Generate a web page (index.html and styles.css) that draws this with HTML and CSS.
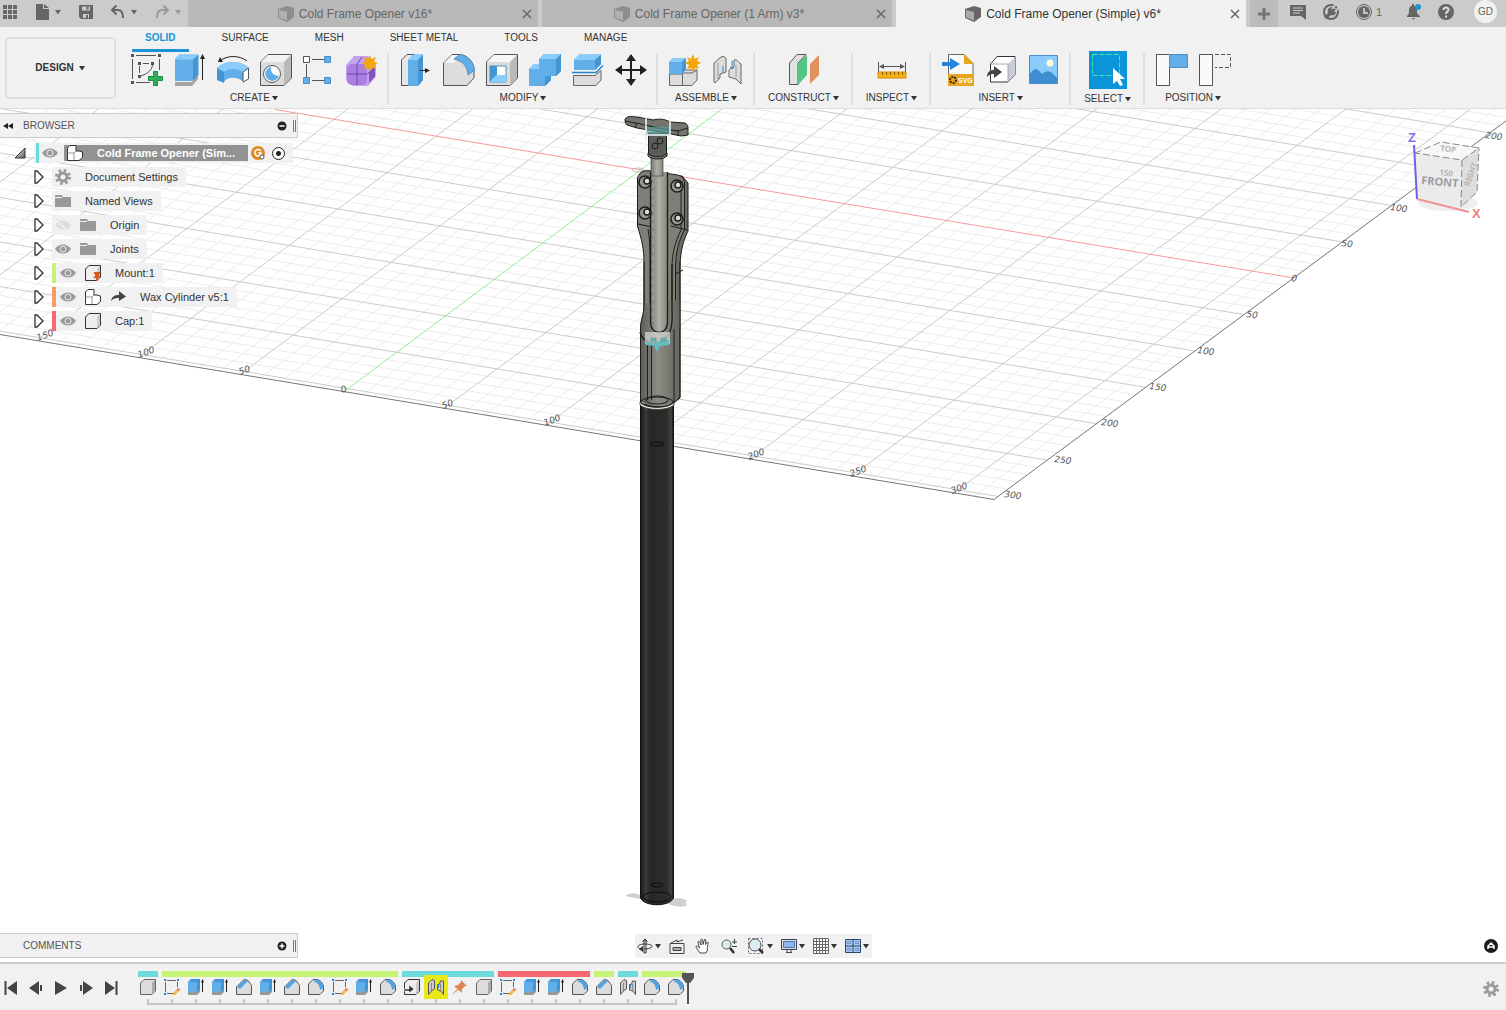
FILE: index.html
```html
<!DOCTYPE html>
<html lang="en">
<head>
<meta charset="utf-8">
<title>Cold Frame Opener (Simple) v6*</title>
<link rel="stylesheet" href="styles.css">
</head>
<body>
<svg class="defs" aria-hidden="true">
  <defs>
    <linearGradient id="tube" x1="0" x2="1" y1="0" y2="0">
      <stop offset="0" stop-color="#151514"/><stop offset=".15" stop-color="#3a3a37"/><stop offset=".3" stop-color="#272726"/><stop offset=".8" stop-color="#2c2c2a"/><stop offset=".93" stop-color="#454541"/><stop offset="1" stop-color="#111"/>
    </linearGradient>
    <linearGradient id="rod" x1="0" x2="1" y1="0" y2="0">
      <stop offset="0" stop-color="#77776f"/><stop offset=".5" stop-color="#b0b0a9"/><stop offset="1" stop-color="#85857d"/>
    </linearGradient>
    <linearGradient id="sleeve" x1="0" x2="1" y1="0" y2="0">
      <stop offset="0" stop-color="#5d5d57"/><stop offset=".45" stop-color="#8c8c85"/><stop offset="1" stop-color="#65655f"/>
    </linearGradient>
    <linearGradient id="tri" x1="0" x2="1" y1="0" y2="1"><stop offset="0" stop-color="#fff"/><stop offset="1" stop-color="#555"/></linearGradient>
    <clipPath id="plane"><path d="M0 334.500 994 499.500 1506 120V90H0Z"/></clipPath>
  </defs>
  <symbol id="caret" viewBox="0 0 8 8"><path d="M1 2h6L4 6.500Z" fill="currentColor"/></symbol>
  <symbol id="close" viewBox="0 0 10 10"><path d="M1 1l8 8M9 1 1 9" stroke="currentColor" stroke-width="1.500" fill="none"/></symbol>
  <symbol id="apps" viewBox="0 0 16 16"><path d="M1 1h4v4H1zM6 1h4v4H6zM11 1h4v4h-4zM1 6h4v4H1zM6 6h4v4H6zM11 6h4v4h-4zM1 11h4v4H1zM6 11h4v4H6zM11 11h4v4h-4z" fill="#666"/></symbol>
  <symbol id="file" viewBox="0 0 16 16"><path d="M2 0h7v5h6v11H2zM10 0l5 4h-5z" fill="#666"/></symbol>
  <symbol id="save" viewBox="0 0 16 16"><path d="M1 1h14v14H3l-2-2z" fill="#666"/><path d="M4 2.500h8v4H4zM5 10h6v4H5z" fill="#cbcbcb"/><path d="M8.500 2.500h2v3h-2zM8 11h2v3H8z" fill="#666"/></symbol>
  <symbol id="undo" viewBox="0 0 16 16"><path d="M2 6h6c3.500 0 5 2.500 5 8M6.500 1.500 2 6l4.500 4.500" fill="none" stroke="currentColor" stroke-width="2"/></symbol>
  <symbol id="doc" viewBox="0 0 16 16"><path d="M0 3 9 0l7 2v9l-7 5-9-4z" fill="#666"/><path d="M1 4l8 2v8.500L1 11.500z" fill="#a9a9a9"/></symbol>
  <symbol id="plus" viewBox="0 0 14 14"><path d="M7 1v12M1 7h12" stroke="#777" stroke-width="3"/></symbol>
  <symbol id="msg" viewBox="0 0 18 18"><path d="M1 2h16v15l-5-4H1z" fill="#666"/><path d="M4 5h10M4 7.500h10M4 10h7" stroke="#cbcbcb"/></symbol>
  <symbol id="ext" viewBox="0 0 18 18"><circle cx="9" cy="9" r="7" fill="none" stroke="#666" stroke-width="2"/><path d="M2 14 6 10c-1-4 1-6 5-6l3 3c1 4-2 6-5 5l-4 4z" fill="#666"/><path d="M10 6l4-5M13 9l4-5" stroke="#cbcbcb" stroke-width="2"/></symbol>
  <symbol id="clock" viewBox="0 0 18 18"><circle cx="9" cy="9" r="7.500" fill="none" stroke="#666"/><circle cx="9" cy="9" r="6" fill="#666"/><path d="M9 5v5h4" fill="none" stroke="#ddd" stroke-width="1.500"/></symbol>
  <symbol id="bell" viewBox="0 0 18 18"><path d="M3 13c2-2 2-3 2-6 0-2 1-4 3-4V1h2v2c2 0 3 2 3 4 0 3 0 4 3 6v1H3zM8 15h3l-1.500 2z" fill="#666"/><circle cx="14" cy="4" r="3" fill="#1a94d6"/></symbol>
  <symbol id="help" viewBox="0 0 18 18"><circle cx="9" cy="9" r="8" fill="#666"/><path d="M6.500 7c0-3.500 5.500-3 5 0-.2 1.500-2.500 1.800-2.500 4M9 12.500v2" fill="none" stroke="#ddd" stroke-width="2"/></symbol>

  <symbol id="t-sketch" viewBox="0 0 32 32"><path d="M5 1.500h20M1.500 5v20M28.500 5v11M5 28.500h14M12 9.500h6M8.500 12v7" stroke="#555" fill="none"/><path d="M21.500 10c0 6-5 10-12 12" stroke="#555" fill="none"/><path d="M0 0h3v3H0zM27 0h3v3h-3zM0 27h3v3H0zM7 8h3v3H7zM20 8h3v3h-3zM7 21h3v3H7z" fill="#555"/><path d="M22.500 17.500h4v5h5v4h-5v5h-4v-5h-5v-4h5z" fill="#2eae56" stroke="#1a8f40"/></symbol>
  <symbol id="t-extrude" viewBox="0 0 32 32"><path d="M1 28h17l6-7v4l-6 7H1z" fill="#a6a6a6"/><path d="M1 5 5 .5h19L19 5v22H1z" fill="#62aee8"/><path d="M1 5.500 5.500.5h19L19 5.500z" fill="#8acdfd"/><path d="M19 5.500 24.500.5V21L19 27z" fill="#4395d3"/><path d="M28.500 26V4" stroke="#222"/><path d="M28.500 0 31 5h-5z" fill="#222"/></symbol>
  <symbol id="t-revolve" viewBox="0 0 32 32"><path d="M0 14c8-8 24-8 32 0l-5 2v12c-6-5-16-6-20 0L0 26z" fill="#62aee8"/><path d="M0 14c8-8 24-8 32 0l-6 4c-5-4-15-4-19 0z" fill="#8acdfd"/><path d="M7 18v11L0 26V14zM0 14l7 4" fill="#4395d3"/><path d="M26 18l5.500-4v11l-5.500 3z" fill="#fff" stroke="#555"/><path d="M3 7c7-6 19-6 27 0" stroke="#222" fill="none"/><path d="M1 8l2-5 3 5z" fill="#222"/></symbol>
  <symbol id="t-hole" viewBox="0 0 32 32"><path d="M.5 8 8 .5h23.500V24L24 31.500H.5z" fill="#dcdcdc" stroke="#555"/><path d="M1 8 8 1h23l-7 7z" fill="#f3f3f3"/><path d="M24 8l7-7v23l-7 7z" fill="#b9b9b9"/><circle cx="12" cy="20" r="8.500" fill="#fff" stroke="#555"/><path d="M11 13a7 7 0 1 0 8 9c-5 0-9-4-8-9z" fill="#62aee8"/></symbol>
  <symbol id="t-pattern" viewBox="0 0 32 32"><path d="M9 5.500h12M3.500 10v13M9 26.500h12" stroke="#555"/><path d="M.5 2.500h6v6h-6z" fill="#fff" stroke="#555"/><path d="M21.500 2.500h6v6h-6zM.5 23.500h6v6h-6zM21.500 23.500h6v6h-6z" fill="#62aee8" stroke="#4d8fc4"/></symbol>
  <symbol id="t-form" viewBox="0 0 32 32"><path d="M8 2h14l8 8v12l-8 10H7l-7-6V11z" fill="#c3a2f0"/><rect x="1" y="10" width="20" height="21" rx="5" fill="#a97fe0"/><path d="M23 18l6-6v11l-6 6z" fill="#8453c4"/><path d="M1 20h20l8-5M11 10v21M11 10l5-7" stroke="#7245b0" fill="none"/><path d="M24 1l1.500 4L30 3l-2 4.500 4 1.500-4 2 2 4-4.500-1.500L24 18l-2-4.500-4.500 1.500 2-4-4-2 4-1.500-2-4.500L22 5z" fill="#f6a609"/></symbol>
  <symbol id="t-press" viewBox="0 0 32 32"><path d="M1.500 6 7 .5h8L9 6v25.500H1.500z" fill="#e6e6e6" stroke="#555"/><path d="M8 6 13.500.5H23V26l-5 6H8z" fill="#62aee8"/><path d="M8 6l5.500-5.500H23L18 6z" fill="#8acdfd"/><path d="M18 6l5-5.500V26l-5 6z" fill="#4395d3"/><path d="M20 16.500h7" stroke="#222"/><path d="M30 16.500 25 19v-5z" fill="#222"/></symbol>
  <symbol id="t-fillet" viewBox="0 0 32 32"><path d="M.5 9 9 .5h8c9 1 14 9 14 16V24l-7 7.500H.5z" fill="#dcdcdc" stroke="#555"/><path d="M1 9 9 1h8l-6 8z" fill="#f4f4f4"/><path d="M11 5 17 .5C27 2 31 10 31.500 16L25 21C25 13 20 7 11 5z" fill="#62aee8" stroke="#4d8fc4"/></symbol>
  <symbol id="t-shell" viewBox="0 0 32 32"><path d="M.5 8 8 .5h23.500V24L24 31.500H.5z" fill="#dcdcdc" stroke="#555"/><path d="M1 8 8 1h23l-7 7z" fill="#f7f7f7"/><path d="M24 8l7-7v23l-7 7z" fill="#b9b9b9"/><path d="M4 12h16v16H4z" fill="#fff" stroke="#4d8fc4"/><path d="M4 12h7v9l-7 7z" fill="#4395d3"/><path d="M4 28l6-7h10v7z" fill="#8acdfd"/></symbol>
  <symbol id="t-combine" viewBox="0 0 32 32"><path d="M10 5l5-5h17v17l-5 5h-5v4l-6 6H0V15l5-5h5z" fill="#62aee8"/><path d="M10 5l5-5h17l-5 5zM0 15l5-5h5v5z" fill="#8acdfd"/><path d="M27 5l5-5v17l-5 5zM16 26v6l6-6v-4h-6z" fill="#4395d3"/></symbol>
  <symbol id="t-split" viewBox="0 0 32 32"><path d="M2 6 7 .5h22V10l-6 6H2z" fill="#62aee8"/><path d="M2 6 7 .5h22L23 6z" fill="#8acdfd"/><path d="M23 6l6-5.500V10l-6 6z" fill="#4395d3"/><path d="M0 18.500h24l7-7" fill="none" stroke="#2286c9" stroke-width="1.500"/><path d="M1.500 21.500H23l6-5V26l-5 5.500H1.500z" fill="#dcdcdc" stroke="#666"/></symbol>
  <symbol id="t-move" viewBox="0 0 32 32"><path d="M16 4v24M4 16h24" stroke="#222" stroke-width="2"/><path d="M16 0l5 7H11zM16 32l5-7H11zM0 16l7-5v10zM32 16l-7-5v10z" fill="#222"/></symbol>
  <symbol id="t-newcomp" viewBox="0 0 32 32"><path d="M.5 20h13v-3l2-1h12.500v10l-5 5.500H.5z" fill="#dcdcdc" stroke="#666"/><path d="M13.500 31V19h9.500l5-3" fill="none" stroke="#666"/><path d="M0 8l4-4h13v11l-4 5H0z" fill="#62aee8"/><path d="M0 8l4-4h13l-4 4z" fill="#8acdfd"/><path d="M13 8l4-4v11l-4 5z" fill="#4395d3"/><path d="M24 0l1.500 5L30 3l-2 4 4 2-4 2 2 4-4-1-2 4-2-4-4 1 2-4-4-2 4-2-2-4 4 2z" fill="#f6a609"/></symbol>
  <symbol id="t-joint" viewBox="0 0 32 32"><path d="M2 9 9 3c3-1 5 0 5 2v13l-6 2v4l-5 5-1-1z" fill="#dcdcdc" stroke="#666"/><path d="M17 16c2-2 4-2 5-4V6c3-1 4 2 7 4v20l-5-5-7-2z" fill="#dcdcdc" stroke="#666"/><path d="M6 9v16M24 11v12" stroke="#999"/><path d="M11 12v7M20 7v8M18 13l2 2 2-2" stroke="#2286c9" fill="none"/></symbol>
  <symbol id="t-plane" viewBox="0 0 32 32"><path d="M1.500 9 9 .5h9L10 9v21.500H1.500z" fill="#e2e2e2" stroke="#555"/><path d="M10 9l9-8v20l-9 10z" fill="#55c585"/><path d="M22 10l9-9v20l-9 9z" fill="#e2925f"/></symbol>
  <symbol id="t-measure" viewBox="0 0 32 32"><path d="M2.500 8v10M29.500 8v10M5 12.500h22" stroke="#555"/><path d="M3 12.500 8 10v5zM29 12.500 24 10v5z" fill="#555"/><path d="M2 18h28v6H2z" fill="#f9b21a" stroke="#d88d00"/><path d="M6.500 18v3M10.500 18v3M14.500 18v3M18.500 18v3M22.500 18v3M26.500 18v3" stroke="#8a5a00"/></symbol>
  <symbol id="t-svg" viewBox="0 0 32 32"><path d="M6.500 31V.5H22l9 9V31z" fill="#fafafa" stroke="#666"/><path d="M22 0v10h10z" fill="#e9a520"/><path d="M6 20h26v12H6z" fill="#e9a520"/><path d="M0 8h8V4l10 6-10 6v-4H0z" fill="#1f87de"/><circle cx="11" cy="26" r="3" fill="none" stroke="#3a2800" stroke-width="2" stroke-dasharray="2 1"/></symbol>
  <symbol id="t-insert" viewBox="0 0 32 32"><path d="M5.500 10 12 2.500h18V21l-7 7H5.500z" fill="#fff" stroke="#333"/><path d="M23 10l7-7v18l-7 7z" fill="#c9ccda"/><path d="M6 10h17v18" fill="none" stroke="#aaa"/><path d="M2 23c0-6 4-7 7-7v-4l8 6-8 6v-4c-3 0-4 0-7 3z" fill="#444"/></symbol>
  <symbol id="t-image" viewBox="0 0 32 32"><path d="M1.500 1.500h28v28h-28z" fill="#8acdfd" stroke="#4d8fc4"/><path d="M2 20c6-9 8-4 12 0 5-4 8-4 15 4v5H2z" fill="#3d8ed0"/><circle cx="22" cy="9" r="3.500" fill="#fffbdc"/></symbol>
  <symbol id="t-select" viewBox="0 0 38 38"><path d="M3.500 3.500h27v21h-27z" fill="none" stroke="#3fe6a5" stroke-dasharray="5 2"/><path d="M24 17v16l4-3 3 5 3-1-3-6h5z" fill="#fff"/></symbol>
  <symbol id="t-capture" viewBox="0 0 32 32"><path d="M.5.5h13v31H.5z" fill="#fafafa" stroke="#555"/><path d="M13.500.5h18v13h-18z" fill="#62aee8" stroke="#4d8fc4"/></symbol>
  <symbol id="t-revert" viewBox="0 0 32 32"><path d="M.5.5h13v31H.5z" fill="#fafafa" stroke="#555"/><path d="M16 .5h15.500v13H16" fill="none" stroke="#555" stroke-dasharray="4 2"/></symbol>

  <symbol id="eye" viewBox="0 0 16 16"><path d="M0 8c4-6 12-6 16 0-4 6-12 6-16 0z" fill="#999"/><circle cx="8" cy="8" r="3" fill="#999" stroke="#eee"/></symbol>
  <symbol id="eyeoff" viewBox="0 0 16 16"><path d="M0 8c4-6 12-6 16 0-4 6-12 6-16 0z" fill="#dcdcdc"/><path d="M2 3l12 11" stroke="#f1f1f1" stroke-width="3"/><path d="M2 2l12 11" stroke="#d0d0d0"/></symbol>
  <symbol id="gear" viewBox="0 0 16 16"><circle cx="8" cy="8" r="6.500" fill="none" stroke="#999" stroke-width="3" stroke-dasharray="2.500 2.600"/><circle cx="8" cy="8" r="4" fill="none" stroke="#999" stroke-width="3"/></symbol>
  <symbol id="folder" viewBox="0 0 16 16"><path d="M0 2h7l1 2h8v10H0z" fill="#999"/><path d="M0 4.500h7" stroke="#f1f1f1"/></symbol>
  <symbol id="asm" viewBox="0 0 16 16"><path d="M.5 3 3 .5h6V6h3l3.500 1v5.500L12 15.500H.5z" fill="#fff" stroke="#333"/><path d="M.5 8H7l2-2M7 8v7" fill="none" stroke="#999"/></symbol>
  <symbol id="box" viewBox="0 0 16 16"><path d="M.5 4 4 .5h11.500V12L12 15.500H.5z" fill="#eee" stroke="#333"/><path d="M12 4l3-3v11l-3 3z" fill="#ccc"/></symbol>
  <symbol id="solid" viewBox="0 0 16 16"><path d="M.5 4 4 .5h11.500V12L12 15.500H.5z" fill="#dcdcdc" stroke="#666"/><path d="M12 4l3-3v11l-3 3z" fill="#aaa"/></symbol>
  <symbol id="mount" viewBox="0 0 16 16"><use href="#box"/><path d="M9 7h6v2h-1v2l2 2h-3v3h-2v-3H8l2-2V9H9z" fill="#d9591c"/></symbol>
  <symbol id="link" viewBox="0 0 16 16"><path d="M1 12c1-5 4-6 8-6V2l7 5.500L9 12V9c-3 0-5 0-8 3z" fill="#444"/></symbol>
  <symbol id="arrow" viewBox="0 0 10 14"><path d="M1 1h2l6 6-6 6H1z" fill="#fafafa" stroke="#333" stroke-width="1.300"/></symbol>
  <symbol id="arrow-open" viewBox="0 0 12 12"><path d="M11 1v10H1z" fill="url(#tri)" stroke="#333"/></symbol>
  <symbol id="badge" viewBox="0 0 16 16"><circle cx="8" cy="8" r="7" fill="#dd8b20"/><path d="M11 6c-2-3-7-1-6 2 0 4 6 4 6 0H8" fill="none" stroke="#fff" stroke-width="1.500"/><circle cx="12" cy="12" r="2" fill="#fff" stroke="#555"/></symbol>
  <symbol id="minus-dot" viewBox="0 0 10 10"><circle cx="5" cy="5" r="4.500" fill="#222"/><path d="M2.500 5h5" stroke="#fff" stroke-width="1.500"/></symbol>
  <symbol id="plus-dot" viewBox="0 0 10 10"><circle cx="5" cy="5" r="4.500" fill="#222"/><path d="M2.500 5h5M5 2.500v5" stroke="#fff" stroke-width="1.500"/></symbol>
  <symbol id="collapse" viewBox="0 0 10 6"><path d="M5 0v6L0 3zM10 0v6L5 3z" fill="#222"/></symbol>

  <symbol id="n-orbit" viewBox="0 0 16 16"><path d="M7 2h2v13H7zM5.500 4 8 1l2.500 3M3 11C-2 8 3 6 8 6s10 2 5 4c-2 1-4 1-6 1" fill="none" stroke="#333"/><path d="M2 11l4-3v6z" fill="#333"/></symbol>
  <symbol id="n-look" viewBox="0 0 16 16"><path d="M1 5.500h14v10H1zM2 5l6-3v2l6-2" fill="#eee" stroke="#444"/><path d="M4 9.500h8v3H4z" fill="#aaa" stroke="#444"/></symbol>
  <symbol id="n-hand" viewBox="0 0 16 16"><path d="M5 15C3 12 1 10 1 8.500 2 7 3 9 4.500 10L3 4c1-2 2 0 3 3V1.500c1-1.500 2 0 2 5L9.500 1.500c2-1 1 2 1 5L12.500 4c2 0-1 5 0 8l-1.500 3z" fill="#fff" stroke="#444"/></symbol>
  <symbol id="n-zoom" viewBox="0 0 16 16"><circle cx="5.500" cy="6.500" r="4.500" fill="#dcecf0" stroke="#555"/><path d="M9 10l4 5" stroke="#333" stroke-width="2.500"/><path d="M11 4h5M13.500 1v5M11 8.500h5" stroke="#444"/></symbol>
  <symbol id="n-fit" viewBox="0 0 18 16"><path d="M1.500.5h14v15h-14z" fill="none" stroke="#666" stroke-dasharray="2 2"/><circle cx="8" cy="7" r="6" fill="#dcecf0" stroke="#555"/><path d="M12 11l4 4" stroke="#333" stroke-width="2.500"/></symbol>
  <symbol id="n-display" viewBox="0 0 16 16"><path d="M.5 1.500h15v10H.5z" fill="#ddd" stroke="#34465c"/><path d="M2.500 3.500h11v6h-11z" fill="#8fb4e8" stroke="#4d78b5"/><path d="M5 14.500h6M6 12v2M10 12v2" stroke="#444"/></symbol>
  <symbol id="n-grid" viewBox="0 0 16 16"><path d="M.5.5h15v15H.5zM3.500 0v16M6.500 0v16M9.500 0v16M12.500 0v16M0 3.500h16M0 6.500h16M0 9.500h16M0 12.500h16" fill="#fff" stroke="#666"/></symbol>
  <symbol id="n-views" viewBox="0 0 16 16"><path d="M.5 1.500h15v13H.5zM8 1.500v13M.5 8h15" fill="#a9c8f2" stroke="#2d4668"/><path d="M2.500 3.500h3v2h-3zM10.500 3.500h3v2h-3zM2.500 10.500h3v2h-3zM10.500 10.500h3v2h-3z" fill="none" stroke="#6e95cf"/></symbol>
  <symbol id="adsk" viewBox="0 0 16 16"><circle cx="8" cy="8" r="7" fill="#1c1c1c"/><path d="M5 11V8l3-3 3 3v3M5.500 9h5" fill="none" stroke="#fff" stroke-width="1.500"/></symbol>

  <symbol id="p-first" viewBox="0 0 14 14"><path d="M1.500 0v14" stroke="#444" stroke-width="2"/><path d="M13 0v14L3 7z" fill="#444"/></symbol>
  <symbol id="p-prev" viewBox="0 0 14 14"><path d="M10 0v14L0 7zM11 4h2v6h-2z" fill="#444"/></symbol>
  <symbol id="p-play" viewBox="0 0 14 14"><path d="M1 0v14l12-7z" fill="#444"/></symbol>

  <symbol id="f-sketch" viewBox="0 0 16 16"><path d="M3 1.500h9M1.500 3v10M13.500 3v5M3 14.500h6" stroke="#666" fill="none"/><path d="M0 0h2v2H0zM13 0h2v2h-2zM0 14h2v2H0z" fill="#1f87de"/><path d="M9 14l4-4 2 2-4 4H8z" fill="#f3b14b"/><path d="M13 10l1-1 2 2-1 1z" fill="#e04848"/></symbol>
  <symbol id="f-extrude" viewBox="0 0 16 16"><path d="M0 12h9l3-3v4l-3 3H0z" fill="#999"/><path d="M0 3 3 0h9v10l-3 3H0z" fill="#4395d3"/><path d="M0 3h9v10H0z" fill="#62aee8"/><path d="M14.500 2v11" stroke="#222"/><path d="M14.500 0 16 3.500h-3z" fill="#222"/></symbol>
  <symbol id="f-chamfer" viewBox="0 0 16 16"><path d="M.5 8 8 .5l4 1 3.500 5V15.500H.5z" fill="#dcdcdc" stroke="#555"/><path d="M1 8 8 1l4 1-8 8z" fill="#4fa3e3"/></symbol>
  <symbol id="f-fillet" viewBox="0 0 16 16"><path d="M.5 5 5 .5h4c4 1 6.500 4 6.500 8V12L12 15.500H.5z" fill="#dcdcdc" stroke="#555"/><path d="M5 2 8 .5C13 1 15.500 5 15.500 9L12 11c0-5-3-8-7-9z" fill="#4fa3e3"/></symbol>
  <symbol id="f-insert" viewBox="0 0 16 16"><use href="#box"/><path d="M0 10h5V6l5 4-5 4v-2H0z" fill="#333" stroke="#fff" stroke-width=".500"/></symbol>
  <symbol id="f-joint" viewBox="0 0 16 16"><path d="M.5 4 4 .5l2.500 1V10l-2 1-4 4.500zM9.500 7l2-2 1-3 3 0v13.500L13 12l-3.500-1z" fill="#ccc" stroke="#555"/><path d="M3.500 4v8M12.500 5v6" stroke="#888"/><path d="M10 5v4" stroke="#2286c9" stroke-width="2"/></symbol>
  <symbol id="f-pin" viewBox="0 0 16 16"><path d="M9 1l6 6-2 0-3 3v4L2 7l4-1 3-3zM5 10l1 1-6 5z" fill="#dd8650"/></symbol>
</svg>

<header class="topbar">
  <div class="quick">
    <button aria-label="Data panel"><svg class="i16"><use href="#apps"/></svg></button>
    <button aria-label="File"><svg class="i16"><use href="#file"/></svg><svg class="i8"><use href="#caret"/></svg></button>
    <button aria-label="Save"><svg class="i16"><use href="#save"/></svg></button>
    <button aria-label="Undo"><svg class="i16"><use href="#undo"/></svg><svg class="i8"><use href="#caret"/></svg></button>
    <button aria-label="Redo" class="off"><svg class="i16 flip"><use href="#undo"/></svg><svg class="i8"><use href="#caret"/></svg></button>
  </div>
  <nav class="doctabs">
    <div class="doctab"><a href="#v16"><svg class="i16"><use href="#doc"/></svg>Cold Frame Opener v16*</a><button aria-label="Close v16"><svg class="i10"><use href="#close"/></svg></button></div>
    <div class="doctab"><a href="#v3"><svg class="i16"><use href="#doc"/></svg>Cold Frame Opener (1 Arm) v3*</a><button aria-label="Close v3"><svg class="i10"><use href="#close"/></svg></button></div>
    <div class="doctab on"><a href="#v6"><svg class="i16"><use href="#doc"/></svg>Cold Frame Opener (Simple) v6*</a><button aria-label="Close v6"><svg class="i10"><use href="#close"/></svg></button></div>
  </nav>
  <div class="account">
    <button class="add" aria-label="New design"><svg class="i14"><use href="#plus"/></svg></button>
    <button aria-label="Comments"><svg class="i18"><use href="#msg"/></svg></button>
    <button aria-label="Extensions"><svg class="i18"><use href="#ext"/></svg></button>
    <button class="jobs" aria-label="Job status"><svg class="i18"><use href="#clock"/></svg>1</button>
    <button aria-label="Notifications"><svg class="i18"><use href="#bell"/></svg></button>
    <button aria-label="Help"><svg class="i18"><use href="#help"/></svg></button>
    <button class="avatar">GD</button>
  </div>
</header>

<section class="ribbon">
  <button class="workspace">DESIGN <svg class="i8"><use href="#caret"/></svg></button>
  <div class="tools">
    <nav class="modes"><button class="on">SOLID</button><button>SURFACE</button><button>MESH</button><button>SHEET METAL</button><button>TOOLS</button><button>MANAGE</button></nav>
    <div class="groups">
      <div class="group"><div class="icons"><button aria-label="Create sketch"><svg><use href="#t-sketch"/></svg></button><button aria-label="Extrude"><svg><use href="#t-extrude"/></svg></button><button aria-label="Revolve"><svg><use href="#t-revolve"/></svg></button><button aria-label="Hole"><svg><use href="#t-hole"/></svg></button><button aria-label="Pattern"><svg><use href="#t-pattern"/></svg></button><button aria-label="Create form"><svg><use href="#t-form"/></svg></button></div><button class="menu">CREATE<svg class="i8"><use href="#caret"/></svg></button></div>
      <div class="group"><div class="icons"><button aria-label="Press pull"><svg><use href="#t-press"/></svg></button><button aria-label="Fillet"><svg><use href="#t-fillet"/></svg></button><button aria-label="Shell"><svg><use href="#t-shell"/></svg></button><button aria-label="Combine"><svg><use href="#t-combine"/></svg></button><button aria-label="Split body"><svg><use href="#t-split"/></svg></button><button aria-label="Move"><svg><use href="#t-move"/></svg></button></div><button class="menu">MODIFY<svg class="i8"><use href="#caret"/></svg></button></div>
      <div class="group"><div class="icons"><button aria-label="New component"><svg><use href="#t-newcomp"/></svg></button><button aria-label="Joint"><svg><use href="#t-joint"/></svg></button></div><button class="menu">ASSEMBLE<svg class="i8"><use href="#caret"/></svg></button></div>
      <div class="group"><div class="icons"><button aria-label="Offset plane"><svg><use href="#t-plane"/></svg></button></div><button class="menu">CONSTRUCT<svg class="i8"><use href="#caret"/></svg></button></div>
      <div class="group"><div class="icons"><button aria-label="Measure"><svg><use href="#t-measure"/></svg></button></div><button class="menu">INSPECT<svg class="i8"><use href="#caret"/></svg></button></div>
      <div class="group"><div class="icons"><button aria-label="Insert SVG"><svg viewBox="0 0 32 32"><use href="#t-svg"/><text x="16" y="29" class="svg-tag">SVG</text></svg></button><button aria-label="Insert derive"><svg><use href="#t-insert"/></svg></button><button aria-label="Canvas"><svg><use href="#t-image"/></svg></button></div><button class="menu">INSERT<svg class="i8"><use href="#caret"/></svg></button></div>
      <div class="group"><div class="icons"><button class="picked" aria-label="Select"><svg><use href="#t-select"/></svg></button></div><button class="menu">SELECT<svg class="i8"><use href="#caret"/></svg></button></div>
      <div class="group"><div class="icons"><button aria-label="Capture position"><svg><use href="#t-capture"/></svg></button><button aria-label="Revert position"><svg><use href="#t-revert"/></svg></button></div><button class="menu">POSITION<svg class="i8"><use href="#caret"/></svg></button></div>
    </div>
  </div>
</section>

<main class="viewport">
  <svg class="scene" viewBox="0 109 1506 853" preserveAspectRatio="xMidYMin slice" role="img" aria-label="Model view">
    <g clip-path="url(#plane)"><g id="minor" stroke="#ececec"></g><g id="major" stroke="#cbcbcb"></g>
      <path d="M275 109.500 1294 278" stroke="#f79a9a"/><path d="M345 391 722 109" stroke="#8df08d"/></g>
    <path d="M0 334.500 994 499.500 1506 121" fill="none" stroke="#777"/>
    <g class="ticks">
      <text transform="translate(1004 497) rotate(7)">300</text><text transform="translate(1054 462) rotate(7)">250</text><text transform="translate(1101 425) rotate(7)">200</text><text transform="translate(1149 389) rotate(7)">150</text><text transform="translate(1197 353) rotate(7)">100</text><text transform="translate(1246 317) rotate(7)">50</text><text transform="translate(1291 281) rotate(7)">0</text><text transform="translate(1341 246) rotate(7)">50</text><text transform="translate(1390 210) rotate(7)">100</text><text transform="translate(1485 138) rotate(7)">200</text>
      <text transform="translate(38 341) rotate(-20)">150</text><text transform="translate(139 358) rotate(-20)">100</text><text transform="translate(240 375) rotate(-20)">50</text><text transform="translate(342 393) rotate(-20)">0</text><text transform="translate(443 409) rotate(-20)">50</text><text transform="translate(545 426) rotate(-20)">100</text><text transform="translate(749 460) rotate(-20)">200</text><text transform="translate(851 477) rotate(-20)">250</text><text transform="translate(952 494) rotate(-20)">300</text>
    </g>
    <g class="model">
      <ellipse cx="638" cy="170" rx="6" ry="2" fill="none" stroke="#bbb"/>
      <path d="M625 896c8-5 12-2 18 0l30 3c5-2 14 0 14 2-4 1 2 3-1 5-10 2-14-1-20-3l-26-4z" fill="#cfcfcf" stroke="none"/>
      <path d="M640.500 404v494c4 9 29 9 33 0V404z" fill="url(#tube)" stroke="#111"/>
      <ellipse cx="657" cy="897" rx="14" ry="5" fill="none" stroke="#0b0b0b"/><ellipse cx="657" cy="885" rx="6" ry="2" fill="none" stroke="#0b0b0b"/><ellipse cx="657" cy="444" rx="7" ry="2" fill="none" stroke="#0b0b0b"/>
      <path d="M640 402c6 7 28 7 34 0v3c-6 6-28 6-34 0z" fill="#e5e3d8" stroke="#333" stroke-width=".800"/>
      <path d="M670 176l12 0 6 7v48c-6 12-8 24-8 38v129l-8 6z" fill="#6b6b65"/>
      <path d="M637.500 178c2-7 7-8 14-7l26 4c5 1 7 4 7 10v44c-6 14-9 22-9 40v60H644v-66c0-14-2-22-6.500-37z" fill="#7f7f78"/>
      <path d="M638 224l14 3M648 229c2 10 2 20 2 32v78M687 230l-16-4" fill="none"/>
      <path d="M681 188v42c-6 13-9 23-9 38v130M683 270l-8 4" fill="none"/>
      <path d="M644 304c0 12-4 14-4 26v70c6 8 28 8 34 3v-70l6-6V300z" fill="url(#sleeve)" stroke="none"/>
      <path d="M644 262v42c0 12-3.500 14-3.500 26v72M680 262v135l-6 6v-74" fill="none"/>
      <path d="M640 332c4 16 28 14 31-4 2-8 1-14 1-22v-42" fill="none" stroke-width="1.300"/>
      <path d="M650.500 172v150c0 14 17 14 17 0V172" fill="url(#rod)" stroke-width="1.300"/><path d="M653 175v146" stroke="#aaa" stroke-dasharray="5 3"/>
      <path d="M647.500 342v58M651.500 342v58" fill="none"/><ellipse cx="657" cy="400" rx="11" ry="4" fill="none"/><ellipse cx="657" cy="402" rx="16" ry="5" fill="none"/>
      <g fill="#96968f" stroke-width="1.500"><circle cx="645" cy="182" r="6"/><circle cx="677" cy="186" r="6"/><circle cx="645" cy="213" r="6"/><circle cx="677" cy="219" r="6"/></g>
      <g fill="#ddd" stroke-width="1.500"><circle cx="647" cy="181" r="3"/><circle cx="678" cy="185" r="3"/><circle cx="647" cy="212" r="3"/><circle cx="678" cy="218" r="3"/></g>
      <path d="M651 152h12v24h-12z" fill="url(#rod)" stroke="#444" stroke-width=".700"/>
      <path d="M625 119c3-4 8-2 12-2l16 3c8-2 14 0 17 2l15 1c3 2 3 3 3 6v6l-7 1-20-4-24-4-10-3c-2-2-2-4-2-6z" fill="#75756f"/>
      <path d="M625 121l11 2 22 5 20 3 10-3M636 123v5M678 131v5" fill="none"/>
      <path d="M648.500 133v21c3 5 15 5 18 0v-21z" fill="#5d5d57"/><path d="M648 153c4 5 15 5 19 0v3c-4 4-15 4-19 0z" fill="#777"/><circle cx="655" cy="146" r="3" fill="none"/><circle cx="660" cy="141" r="3" fill="none"/>
      <path d="M645 127h25v8h-25z" fill="#559f9f" opacity=".700" stroke="none"/><path d="M646 116v24M670 116v24M647 135h22" stroke="#eee" stroke-width="2" opacity=".800"/>
      <path d="M645 332h25v12h-25z" fill="#ddd" opacity=".700" stroke="none"/><path d="M646 341c4 4 10 0 23-1v5l-9 1-3 6-3-6-8-1z" fill="#69bcbc" stroke="none"/><path d="M651 338h5v3h-5zM661 338h5v3h-5z" fill="#69bcbc" stroke="#397b7b" stroke-width=".500"/>
    </g>
    <g class="cube">
      <ellipse cx="1448" cy="203" rx="30" ry="8" fill="#eee"/>
      <path d="M1415 153 1441 142 1479 148 1462 160Z" fill="#f7f7f7"/><path d="M1415 153 1462 160 1461 207 1417 200Z" fill="#ebebeb"/><path d="M1462 160 1479 148 1477 192 1461 207Z" fill="#dedede"/>
      <path d="M1415 153 1441 142 1479 148 1462 160ZM1462 160 1461 207 1477 192 1479 148" fill="none" stroke="#888" stroke-dasharray="7 3"/>
      <text transform="translate(1421 184) rotate(5)">FRONT</text><text class="faint" transform="translate(1440 151) rotate(6)">TOP</text><text class="faint" transform="translate(1469 187) rotate(-70)">RIGHT</text><text class="faint" transform="translate(1439 175) rotate(7)">150</text>
      <path d="M1414 145l3 54" stroke="#6a63e6" stroke-width="2"/><path d="M1417 199l52 13" stroke="#f09292" stroke-width="2"/>
      <text class="axis-z" x="1408" y="142">Z</text><text class="axis-x" x="1472" y="218">X</text>
    </g>
  </svg>

  <aside class="browser">
    <div class="panel"><button aria-label="Collapse browser"><svg class="c10"><use href="#collapse"/></svg></button><h2>BROWSER</h2><button aria-label="Minimize"><svg class="i10"><use href="#minus-dot"/></svg></button><span class="grip"></span></div>
    <ul class="tree">
      <li class="root"><button aria-label="Collapse"><svg class="i12"><use href="#arrow-open"/></svg></button><div class="row"><i class="bar cyan"></i><svg class="i16"><use href="#eye"/></svg><span class="name"><svg class="i16"><use href="#asm"/></svg>Cold Frame Opener (Sim...</span><svg class="i16"><use href="#badge"/></svg><input type="radio" checked aria-label="Activate component"></div></li>
      <li><button aria-label="Expand"><svg class="arrow"><use href="#arrow"/></svg></button><div class="row"><svg class="i16"><use href="#gear"/></svg><span>Document Settings</span></div></li>
      <li><button aria-label="Expand"><svg class="arrow"><use href="#arrow"/></svg></button><div class="row"><svg class="i16"><use href="#folder"/></svg><span>Named Views</span></div></li>
      <li><button aria-label="Expand"><svg class="arrow"><use href="#arrow"/></svg></button><div class="row"><svg class="i16"><use href="#eyeoff"/></svg><svg class="i16"><use href="#folder"/></svg><span>Origin</span></div></li>
      <li><button aria-label="Expand"><svg class="arrow"><use href="#arrow"/></svg></button><div class="row"><svg class="i16"><use href="#eye"/></svg><svg class="i16"><use href="#folder"/></svg><span>Joints</span></div></li>
      <li><button aria-label="Expand"><svg class="arrow"><use href="#arrow"/></svg></button><div class="row comp"><i class="bar green"></i><svg class="i16"><use href="#eye"/></svg><svg class="i16"><use href="#mount"/></svg><span>Mount:1</span></div></li>
      <li><button aria-label="Expand"><svg class="arrow"><use href="#arrow"/></svg></button><div class="row comp"><i class="bar orange"></i><svg class="i16"><use href="#eye"/></svg><svg class="i16"><use href="#asm"/></svg><svg class="i16"><use href="#link"/></svg><span>Wax Cylinder v5:1</span></div></li>
      <li><button aria-label="Expand"><svg class="arrow"><use href="#arrow"/></svg></button><div class="row comp"><i class="bar red"></i><svg class="i16"><use href="#eye"/></svg><svg class="i16"><use href="#box"/></svg><span>Cap:1</span></div></li>
    </ul>
  </aside>

  <div class="dock">
    <div class="panel comments"><h2>COMMENTS</h2><button aria-label="Add comment"><svg class="i10"><use href="#plus-dot"/></svg></button><span class="grip"></span></div>
    <div class="navbar">
      <button class="drop" aria-label="Orbit"><svg class="i16"><use href="#n-orbit"/></svg><svg class="i8"><use href="#caret"/></svg></button>
      <button aria-label="Look at"><svg class="i16"><use href="#n-look"/></svg></button>
      <button aria-label="Pan"><svg class="i16"><use href="#n-hand"/></svg></button>
      <button aria-label="Zoom"><svg class="i16"><use href="#n-zoom"/></svg></button>
      <button class="drop" aria-label="Fit"><svg class="i18"><use href="#n-fit"/></svg><svg class="i8"><use href="#caret"/></svg></button>
      <button class="drop" aria-label="Display settings"><svg class="i16"><use href="#n-display"/></svg><svg class="i8"><use href="#caret"/></svg></button>
      <button class="drop" aria-label="Grid and snaps"><svg class="i16"><use href="#n-grid"/></svg><svg class="i8"><use href="#caret"/></svg></button>
      <button aria-label="Viewports"><svg class="i16"><use href="#n-views"/></svg><svg class="i8"><use href="#caret"/></svg></button>
    </div>
    <button class="assist" aria-label="Assistant"><svg class="i16"><use href="#adsk"/></svg></button>
  </div>
</main>

<footer class="timeline">
  <div class="player">
    <button aria-label="Go to start"><svg class="i14"><use href="#p-first"/></svg></button><button aria-label="Step back"><svg class="i14"><use href="#p-prev"/></svg></button><button aria-label="Play"><svg class="i14"><use href="#p-play"/></svg></button><button aria-label="Step forward"><svg class="i14 flip"><use href="#p-prev"/></svg></button><button aria-label="Go to end"><svg class="i14 flip"><use href="#p-first"/></svg></button>
  </div>
  <div class="history">
    <div class="feats cyan"><button aria-label="Component"><svg><use href="#solid"/></svg></button></div>
    <div class="feats green"><button aria-label="Sketch"><svg><use href="#f-sketch"/></svg></button><button aria-label="Extrude"><svg><use href="#f-extrude"/></svg></button><button aria-label="Extrude"><svg><use href="#f-extrude"/></svg></button><button aria-label="Chamfer"><svg><use href="#f-chamfer"/></svg></button><button aria-label="Extrude"><svg><use href="#f-extrude"/></svg></button><button aria-label="Chamfer"><svg><use href="#f-chamfer"/></svg></button><button aria-label="Fillet"><svg><use href="#f-fillet"/></svg></button><button aria-label="Sketch"><svg><use href="#f-sketch"/></svg></button><button aria-label="Extrude"><svg><use href="#f-extrude"/></svg></button><button aria-label="Fillet"><svg><use href="#f-fillet"/></svg></button></div>
    <div class="feats cyan"><button aria-label="Insert"><svg><use href="#f-insert"/></svg></button><button class="hot" aria-label="Joint"><svg><use href="#f-joint"/></svg></button><button aria-label="Ground"><svg><use href="#f-pin"/></svg></button><button aria-label="Component"><svg><use href="#solid"/></svg></button></div>
    <div class="feats red"><button aria-label="Sketch"><svg><use href="#f-sketch"/></svg></button><button aria-label="Extrude"><svg><use href="#f-extrude"/></svg></button><button aria-label="Extrude"><svg><use href="#f-extrude"/></svg></button><button aria-label="Fillet"><svg><use href="#f-fillet"/></svg></button></div>
    <div class="feats green"><button aria-label="Chamfer"><svg><use href="#f-chamfer"/></svg></button></div>
    <div class="feats cyan"><button aria-label="Joint"><svg><use href="#f-joint"/></svg></button></div>
    <div class="feats green"><button aria-label="Fillet"><svg><use href="#f-fillet"/></svg></button><button aria-label="Fillet"><svg><use href="#f-fillet"/></svg></button></div>
    <svg class="marker" viewBox="0 0 12 34"><path d="M0 2h12v5L8 12H4L0 7z" fill="#555"/><path d="M6 8v25" stroke="#555" stroke-width="2"/></svg>
  </div>
  <button class="settings" aria-label="Timeline settings"><svg class="i16"><use href="#gear"/></svg></button>
</footer>
<script src="grid.js"></script>
</body>
</html>
```
FILE: styles.css
```css
* { box-sizing: border-box; }
body { margin: 0; min-height: 100vh; display: flex; flex-direction: column; font: 11px/14px "Liberation Sans", Arial, sans-serif; color: #333; background: #fff; }
button { appearance: none; border: 0; padding: 0; margin: 0; background: none; color: inherit; font: inherit; display: flex; align-items: center; }
svg { display: block; flex: none; }
.defs { position: absolute; width: 0; height: 0; }
.i8 { width: 8px; height: 8px; }
.i10 { width: 10px; height: 10px; }
.c10 { width: 10px; height: 6px; }
.i12 { width: 12px; height: 12px; }
.i14 { width: 14px; height: 14px; }
.i16 { width: 16px; height: 16px; }
.i18 { width: 18px; height: 18px; }
.flip { transform: scaleX(-1); }
.cyan { --tint: #6adbdb; }
.green { --tint: #c5f277; }
.orange { --tint: #f79b66; }
.red { --tint: #f96871; }

.topbar { display: flex; height: 27px; background: #cbcbcb; color: #666; }
.quick { width: 188px; height: 23px; padding-left: 2px; display: flex; align-items: center; gap: 16px; }
.quick button { gap: 4px; }
.quick .off { color: #999; }
.doctabs { flex: 1; display: flex; gap: 4px; }
.doctab { flex: 1; display: flex; align-items: center; padding-right: 6px; background: #b8b8b8; }
.doctab a { flex: 1; display: flex; justify-content: center; gap: 5px; font-size: 12px; line-height: 16px; color: #666; text-decoration: none; }
.doctab a svg { opacity: .5; }
.doctab.on { background: #f1f1f1; }
.doctab.on a { color: #333; }
.doctab.on a svg { opacity: 1; }
.account { width: 260px; padding-left: 4px; display: flex; gap: 15px; height: 23px; align-items: center; }
.add { width: 28px; height: 27px; align-self: flex-start; justify-content: center; background: #bbb; margin-right: -4px; }
.jobs { width: 34px; gap: 3px; }
.avatar { width: 23px; height: 23px; margin-left: 4px; border-radius: 50%; background: #f1f1f1; justify-content: center; font-size: 10px; }

.ribbon { display: flex; height: 82px; background: #f1f1f1; border-bottom: 1px solid #ddd; }
.workspace { width: 111px; height: 62px; margin: 10px 4px 0 5px; border: 2px solid #dfdfdf; border-radius: 4px; justify-content: center; gap: 4px; font-weight: bold; font-size: 10px; }
.modes { display: flex; gap: 20px; padding-left: 12px; font-size: 10px; }
.modes button { padding: 4px 13px 4px; border-bottom: 3px solid transparent; }
.modes .on { border-color: #1a94d6; color: #1a94d6; font-weight: bold; }
.groups { display: flex; }
.group { height: 52px; margin-top: 1px; padding: 0 9px 0 11px; display: flex; flex-direction: column; align-items: center; border-right: 2px solid #dfdfdf; }
.group:last-child { border: 0; }
.icons { display: flex; gap: 11px; height: 34px; align-items: center; }
.icons svg { width: 32px; height: 32px; }
.icons .picked { background: #0c94d8; }
.icons .picked svg { width: 38px; height: 38px; }
.menu { padding: 5px 2px 0; gap: 1px; font-size: 10px; }
.svg-tag { font: bold 7px "Liberation Sans", Arial, sans-serif; fill: #fff; }

.viewport { flex: 1; position: relative; display: flex; flex-direction: column; justify-content: space-between; }
.scene { position: absolute; inset: 0; width: 100%; height: 100%; }
.ticks { font: italic 9px "DejaVu Sans", sans-serif; fill: #555; }
.model { stroke: #1c1c1a; }
.cube { font: bold 11px "Noto Sans", sans-serif; fill: #9a9da3; }
.cube .faint { font-size: 8px; fill: #b5b5b5; }
.axis-z, .axis-x { font: bold 13px "Liberation Sans", Arial, sans-serif; fill: #7b76ee; }
.axis-x { fill: #f08080; }
.browser { position: relative; width: 298px; padding-top: 4px; }
.panel { width: 298px; height: 25px; display: flex; align-items: center; padding: 0 1px 0 3px; background: #f1f1f1; border: 1px solid #ccc; border-left: 0; }
.panel h2 { flex: 1; margin: 0; padding-left: 10px; font-size: 10px; font-weight: normal; color: #555; }
.panel.comments h2 { padding-left: 20px; }
.grip { width: 3px; height: 12px; margin-left: 6px; border: solid #777; border-width: 0 1px; }
.tree { margin: 5px 0 0; padding: 0; list-style: none; display: flex; flex-direction: column; gap: 4px; }
.tree li { display: flex; height: 20px; gap: 8px; padding-left: 34px; }
.tree .root { padding-left: 14px; }
.arrow { width: 10px; height: 14px; }
.row { display: flex; align-items: center; gap: 9px; padding: 0 8px 0 3px; background: #f1f1f1; }
.row span { padding-left: 5px; }
.comp { gap: 9px; padding-left: 0; }
.bar { align-self: stretch; width: 4px; margin-right: -5px; background: var(--tint); }
.root .row { padding: 0 8px 0 2px; gap: 6px; }
.root .bar { width: 3px; margin-right: -3px; }
.root .name { display: flex; gap: 14px; width: 184px; margin-right: -4px; padding: 0 3px; background: #929292; color: #fff; font-weight: bold; align-items: center; white-space: nowrap; }
input[type=radio] { appearance: none; width: 13px; height: 13px; margin: 0; border: 1px solid #222; border-radius: 50%; background: radial-gradient(circle, #222 2px, #fff 3px); }

.dock { position: relative; display: grid; grid-template-columns: 1fr auto 1fr; align-items: center; padding-bottom: 4px; }
.navbar { display: flex; gap: 10px; height: 24px; padding: 0 2px; background: #f1f1f1; }
.navbar button { gap: 1px; }
.navbar .drop { margin-right: -3px; }
.assist { justify-self: end; margin-right: 7px; }

.timeline { display: flex; height: 48px; border-top: 2px solid #ccc; background: #f1f1f1; }
.player { width: 136px; padding: 2px 0 0 4px; display: flex; align-items: center; gap: 11px; }
.history { flex: 1; display: flex; padding-top: 7px; }
.feats { display: flex; height: 34px; padding-top: 2px; background: linear-gradient(var(--tint), var(--tint)) 2px 0 / calc(100% - 4px) 6px no-repeat; }
.feats button { width: 24px; height: 32px; padding-bottom: 4px; justify-content: center; background: linear-gradient(#c6c6c6, #c6c6c6) 50% 100% / 2px 6px no-repeat, linear-gradient(#c6c6c6, #c6c6c6) 50% 100% / 100% 2px no-repeat; }
.feats:first-child button { background-size: 2px 6px, 50% 2px; background-position: 50% 100%, 100% 100%; }
.feats:nth-last-child(2) button:last-child { background-size: 2px 6px, 50% 2px; background-position: 50% 100%, 0 100%; }
.feats svg { width: 16px; height: 16px; }
.feats .hot svg { width: 24px; height: 24px; padding: 4px; background: #e8e81c; }
.marker { width: 12px; height: 34px; margin-left: -6px; }
.settings { padding: 3px 7px 0 0; }
```
FILE: grid.js
```js
// Ground plane: origin and the screen vectors of one 50 mm cell on each axis.
const origin = [640, 170];
const ax = [102, 16.9];
const ay = [-49, 36.4];
const at = (i, j) => [origin[0] + i * ax[0] + j * ay[0], origin[1] + i * ax[1] + j * ay[1]];

function line(from, to, layer) {
  const el = document.createElementNS("http://www.w3.org/2000/svg", "line");
  el.setAttribute("x1", from[0]);
  el.setAttribute("y1", from[1]);
  el.setAttribute("x2", to[0]);
  el.setAttribute("y2", to[1]);
  document.getElementById(layer).append(el);
}

for (let n = -80; n <= 32; n++) {
  if (n === 0) continue; // the coloured axes take this place
  const k = n / 5;
  const layer = n % 5 === 0 ? "major" : "minor";
  line(at(k, -14), at(k, 7), layer);
  line(at(-14, k), at(7, k), layer);
}
```
